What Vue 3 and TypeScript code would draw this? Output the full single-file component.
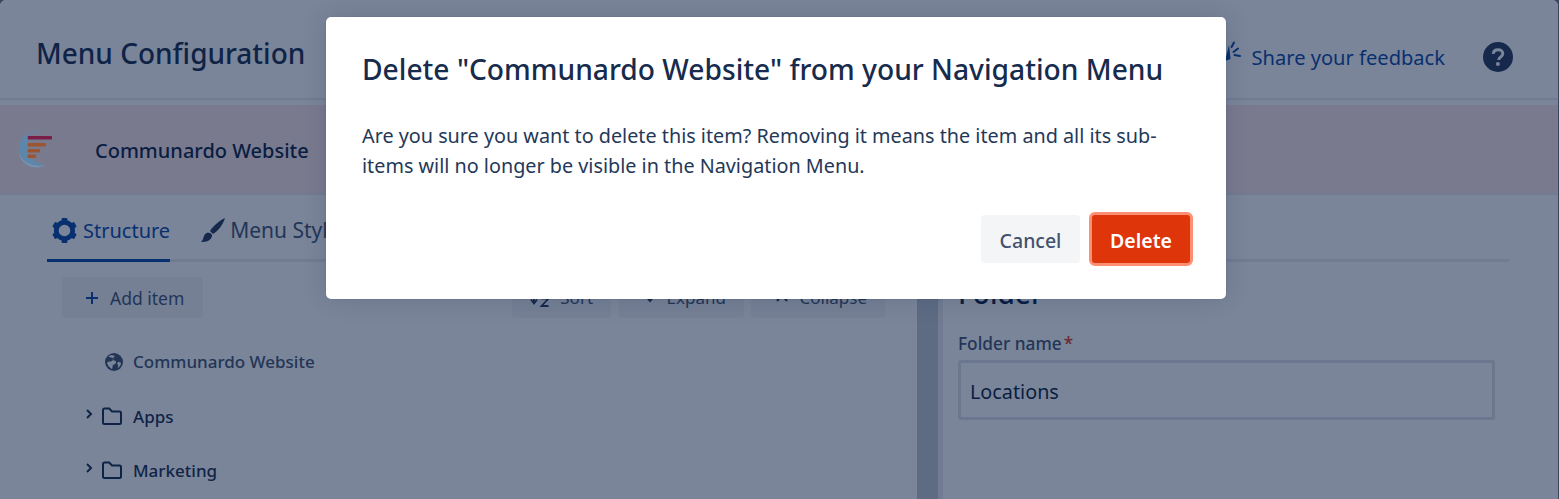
<script setup lang="ts">
interface TreeRow {
  name: string;
  kind: 'globe' | 'folder';
}

interface ToolButton {
  name: string;
  icon: 'sort' | 'down' | 'up';
}

const tools: ToolButton[] = [
  { name: 'Sort', icon: 'sort' },
  { name: 'Expand', icon: 'down' },
  { name: 'Collapse', icon: 'up' }
]

const rows: TreeRow[] = [
  { name: 'Communardo Website', kind: 'globe' },
  { name: 'Apps', kind: 'folder' },
  { name: 'Marketing', kind: 'folder' }
]
</script>

<template>
  <div class="page">
    <header class="topbar">
      <h1 class="page-title">Menu Configuration</h1>
      <div class="topbar-right">
        <a class="feedback">
          <svg class="megaphone" width="26" height="26" viewBox="0 0 26 26">
            <path d="M0 20 4 4l1.500 14z" fill="#0747a6" />
            <path d="M6.500 6l2.500-4.500M8.500 11l4.500-3.500M9.500 14l5.500 1" stroke="#0747a6" stroke-width="2" stroke-linecap="round" fill="none" />
          </svg>
          Share your feedback
        </a>
        <svg class="help" width="30" height="30" viewBox="0 0 30 30">
          <circle cx="15" cy="15" r="15" fill="#253858" />
          <path d="M10.200 11.800c.3-2.600 2.300-4.100 4.900-4.100 2.800 0 4.700 1.600 4.700 3.900 0 1.800-1 2.600-2.200 3.500-1.300.9-1.800 1.500-1.800 3" fill="none" stroke="#fff" stroke-width="3" />
          <circle cx="14.900" cy="22" r="2" fill="#fff" />
        </svg>
      </div>
    </header>

    <section class="banner">
      <svg class="logo" width="36" height="40" viewBox="0 0 36 40">
        <path d="M27 1.500C13 0 2 8 2.300 19 2.500 27 8 33 14 35c4 1.500 10 1.500 15 0-9-.5-16-4-18.300-10V6C14 3 20 1.500 27 1.500z" fill="#5c87aa" />
        <path d="M1 21c1 9 8 17.500 18 17.500 4 0 7-1 10-2.500-5 1.500-17 1-23-6-2-2-4-5-5-9z" fill="#6e94b2" />
        <rect x="10.700" y="7" width="24.300" height="3.400" rx="1" fill="#7a1d49" />
        <rect x="10.700" y="14" width="18.300" height="3.400" rx="1" fill="#9c5530" />
        <rect x="10.700" y="20" width="12.300" height="3.400" rx="1" fill="#9c5530" />
        <rect x="10.700" y="25.500" width="8.300" height="3.400" rx="1" fill="#9c5530" />
      </svg>
      <span class="banner-name">Communardo Website</span>
    </section>

    <main class="workspace">
      <div class="left">
        <nav class="tabs">
          <a class="tab active">
            <svg width="27" height="27" viewBox="0 0 28 28">
              <circle cx="14" cy="14" r="8.500" fill="none" stroke="#0747a6" stroke-width="5" />
              <g fill="#0747a6">
                <rect x="11" y="1" width="6" height="5" rx="1" />
                <rect x="11" y="22" width="6" height="5" rx="1" />
                <rect x="11" y="1" width="6" height="5" rx="1" transform="rotate(60 14 14)" />
                <rect x="11" y="1" width="6" height="5" rx="1" transform="rotate(120 14 14)" />
                <rect x="11" y="1" width="6" height="5" rx="1" transform="rotate(240 14 14)" />
                <rect x="11" y="1" width="6" height="5" rx="1" transform="rotate(300 14 14)" />
              </g>
            </svg>
            Structure
          </a>
          <a class="tab">
            <svg width="26" height="26" viewBox="0 0 26 26">
              <path d="M25 1C20 3 13 9 10 14l3 3c5-3 10-9 12-16zM8 15.500c-3 .5-4 3-4.500 5C3 23 2 24 1 25c5 0 10-1 11-6 .2-1-.5-2-1-2.500z" fill="#253858" />
            </svg>
            Menu Style
          </a>
        </nav>

        <div class="toolbar">
          <button class="tool add">
            <svg width="14" height="14" viewBox="0 0 14 14">
              <path d="M7 1v12M1 7h12" stroke="#0747a6" stroke-width="2" />
            </svg>
            Add item
          </button>
          <div class="tool-group">
            <button v-for="tool in tools" :key="tool.name" class="tool" :class="tool.icon">
              <svg v-if="tool.icon === 'sort'" width="20" height="18" viewBox="0 0 20 18">
                <path d="M4 2v12M1 10.500 4 14.500l3-4" stroke="#253858" stroke-width="1.800" fill="none" />
                <path d="M11.500 9.500h7l-7 7.500h7" stroke="#253858" stroke-width="1.800" fill="none" />
              </svg>
              <svg v-else-if="tool.icon === 'down'" width="14" height="14" viewBox="0 0 14 14">
                <path d="M2 4l5 6 5-6" stroke="#253858" stroke-width="2" fill="none" />
              </svg>
              <svg v-else width="14" height="14" viewBox="0 0 14 14">
                <path d="M2 10l5-6 5 6" stroke="#253858" stroke-width="2" fill="none" />
              </svg>
              {{ tool.name }}
            </button>
          </div>
        </div>

        <ul class="tree">
          <li v-for="row in rows" :key="row.name" class="tree-row" :class="{ root: row.kind === 'globe' }">
            <svg v-if="row.kind === 'folder'" class="chevron" width="8" height="10" viewBox="0 0 8 10">
              <path d="M2 1l4 4-4 4" stroke="#172b4d" stroke-width="2" fill="none" />
            </svg>
            <svg v-if="row.kind === 'globe'" class="row-icon" width="20" height="20" viewBox="0 0 20 20">
              <circle cx="10" cy="10" r="9" fill="#42526e" />
              <path d="M4.500 4.500c1.500 1 3 1 4.500 1.500 1 1 0 2-1 3-2 1-4 0-5 2 1 3 3 5 5 6 1-1 0-3 1-4s3-1 3-3-2-1-3-2 0-2 2-4c-2-1-5-1-6.500.500zM14 10c1 0 2 0 3 1-.3 2-1 3.500-3 5-1-1 1-2 0-3s-1-2 0-3z" fill="#fff" />
            </svg>
            <svg v-else class="row-icon folder" width="20" height="18" viewBox="0 0 20 18">
              <path d="M1 3a1.500 1.500 0 0 1 1.500-1.500h4.700L10 4.500h7.500A1.500 1.500 0 0 1 19 6v9.500a1.500 1.500 0 0 1-1.500 1.500h-15A1.500 1.500 0 0 1 1 15.500z" fill="none" stroke="#172b4d" stroke-width="2" />
            </svg>
            <span>{{ row.name }}</span>
          </li>
        </ul>
      </div>

      <div class="splitter"></div>

      <div class="right">
        <div class="right-tabs"></div>
        <h2 class="folder-title">Folder</h2>
        <label class="field-label">Folder name<span class="required">*</span></label>
        <div class="field">Locations</div>
      </div>
    </main>

    <div class="overlay">
      <div class="dialog">
        <h2 class="dialog-title">Delete "Communardo Website" from your Navigation Menu</h2>
        <p class="dialog-text">Are you sure you want to delete this item? Removing it means the item and all its sub-items will no longer be visible in the Navigation Menu.</p>
        <div class="dialog-actions">
          <button class="btn cancel">Cancel</button>
          <button class="btn danger">Delete</button>
        </div>
      </div>
    </div>
  </div>
</template>

<style>
html,
body {
  margin: 0;
  background: #3a4560;
  overflow: hidden;
}
</style>

<style scoped>
.page {
  position: relative;
  width: 1558px;
  height: 499px;
  overflow: hidden;
  background: #fff;
  border-radius: 6px 6px 0 0;
  font-family: "Noto Sans", "Open Sans", sans-serif;
  color: #172b4d;
}

.topbar {
  height: 98px;
  display: flex;
  align-items: center;
  justify-content: space-between;
  padding: 0 45px 0 36px;
  border-bottom: 2px solid #ebecf0;
}

.page-title {
  margin: 8px 0 0;
  font-size: 28px;
  font-weight: 500;
}

.topbar-right {
  display: flex;
  align-items: center;
  gap: 38px;
  margin-top: 16px;
}

.feedback {
  display: flex;
  align-items: center;
  gap: 1px;
  color: #0747a6;
  font-size: 20.100px;
}

.megaphone {
  margin-top: -6px;
}

.banner {
  position: relative;
  height: 90px;
  margin-top: 5px;
  display: flex;
  align-items: center;
  padding-left: 17px;
  background: #ffe8e9;
  border-bottom: 2px solid #ebecf0;
  box-sizing: border-box;
}

.logo {
  position: relative;
  z-index: 2;
  margin-right: 42px;
}

.banner-name {
  margin-top: 2px;
  font-size: 20px;
  font-weight: 500;
  color: #091e42;
}

.workspace {
  display: flex;
  height: 305px;
}

.left {
  width: 917px;
  padding: 14px 32px 0 47px;
  box-sizing: border-box;
}

.tabs {
  display: flex;
  gap: 30px;
  height: 50px;
  border-bottom: 3px solid #ebecf0;
}

.tab {
  display: flex;
  align-items: center;
  gap: 4px;
  height: 42px;
  padding-bottom: 8px;
  font-size: 21px;
  color: #42526e;
}

.tab.active {
  gap: 5px;
  padding-left: 4px;
  font-size: 20px;
  color: #0747a6;
  border-bottom: 3px solid #0747a6;
}

.toolbar {
  display: flex;
  justify-content: space-between;
  margin-top: 15px;
  padding-left: 15px;
}

.tool-group {
  display: flex;
  gap: 7.500px;
}

.tool {
  display: flex;
  align-items: center;
  gap: 10px;
  height: 41px;
  padding: 0 18px 0 24px;
  border: 0;
  border-radius: 4px;
  background: #f4f5f7;
  font-family: inherit;
  font-size: 17px;
  color: #42526e;
}

.tool.sort {
  padding-left: 18px;
}

.tool.add {
  gap: 11px;
  padding: 0 19px 0 23px;
  font-size: 17.500px;
}

.tree {
  list-style: none;
  margin: 17px 0 0;
  padding: 0 0 0 38px;
}

.tree-row {
  display: flex;
  align-items: center;
  gap: 9px;
  height: 54px;
  font-size: 17px;
  font-weight: 500;
  color: #172b4d;
}

.tree-row.root {
  height: 55px;
  margin-top: -1px;
  padding-left: 19px;
  color: #42526e;
}

.chevron {
  margin-top: -4px;
}

.row-icon.folder {
  margin-right: 2px;
}

.splitter {
  width: 21px;
  background: #c1c7d0;
  border-right: 5px solid #ebecf0;
}

.right {
  flex: 1;
  padding: 14px 63px 0 15px;
}

.right-tabs {
  height: 50px;
  margin-right: -14px;
  border-bottom: 3px solid #ebecf0;
}

.folder-title {
  margin: 12px 0 0;
  font-size: 28px;
  font-weight: 500;
  line-height: 38px;
  color: #091e42;
}

.field-label {
  display: block;
  margin-top: 20px;
  font-size: 17.300px;
  font-weight: 500;
  line-height: 23px;
  color: #42526e;
}

.required {
  margin-left: 2px;
  color: #de350b;
}

.field {
  display: flex;
  align-items: center;
  height: 60px;
  margin-top: 5px;
  padding: 3px 0 0 9px;
  border: 3px solid #dfe1e6;
  border-radius: 3px;
  box-sizing: border-box;
  font-size: 19.800px;
  color: #091e42;
}

.overlay {
  position: absolute;
  inset: 0;
  z-index: 1;
  padding: 17px 0 0 326px;
  background: rgba(9, 30, 66, 0.54);
}

.dialog {
  width: 900px;
  height: 282px;
  padding: 30px 33px 0 36px;
  box-sizing: border-box;
  background: #fff;
  border-radius: 5px;
  box-shadow: 0 0 1px rgba(9, 30, 66, 0.31), 0 0 24px rgba(9, 30, 66, 0.15);
}

.dialog-title {
  margin: 0;
  font-size: 28.200px;
  font-weight: 500;
  line-height: 44px;
  white-space: nowrap;
  color: #172b4d;
}

.dialog-text {
  margin: 30px 0 0;
  font-size: 19.800px;
  line-height: 30px;
  color: #253858;
}

.dialog-actions {
  display: flex;
  justify-content: flex-end;
  align-items: center;
  gap: 9px;
  margin-top: 31px;
}

.btn {
  height: 48px;
  padding: 2px 0 0;
  border: 0;
  border-radius: 4px;
  font-family: inherit;
  font-size: 19.500px;
  font-weight: 500;
}

.cancel {
  width: 99px;
  background: #f4f5f7;
  color: #42526e;
}

.danger {
  width: 104px;
  height: 54px;
  background: #de350b;
  border: 3px solid #ff8f73;
  border-radius: 6px;
  color: #fff;
  font-weight: 600;
}
</style>
